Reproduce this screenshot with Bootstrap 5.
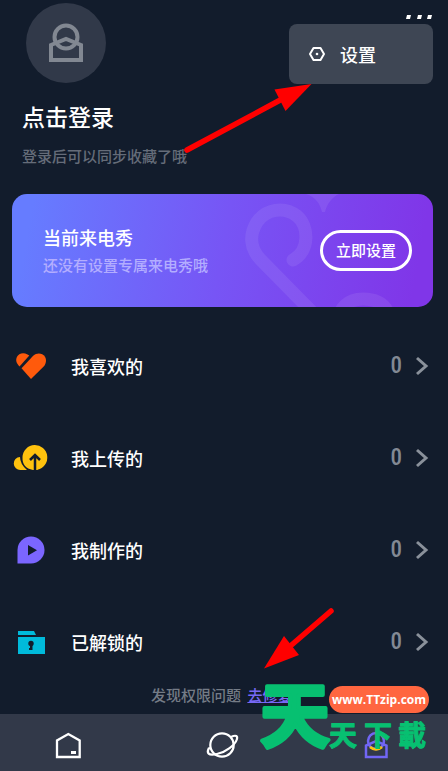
<!DOCTYPE html>
<html lang="zh-CN">
<head>
<meta charset="utf-8">
<meta name="viewport" content="width=device-width, initial-scale=1">
<title>我的</title>
<link href="https://cdn.jsdelivr.net/npm/bootstrap@5.3.0/dist/css/bootstrap.min.css" rel="stylesheet">
<style>
body{background:#121c2c;color:#fff;font-family:"Noto Sans CJK SC",sans-serif;font-size:15px;line-height:24px}
svg{display:block;flex:none;overflow:visible}
.profile{padding:3px 16px 0 22px}
.avatar{width:80px;height:80px;background:#313949;margin-left:4px}
.login-title{font-size:23px;line-height:32px;font-weight:500;margin-top:17px}
.dim{color:#656c79;font-weight:500}
.more{top:12px;right:14px}
.settings-menu{top:24px;right:15px;width:144px;height:60px;background:#3e4654;border-radius:8px;padding-left:20px;gap:15px;font-size:18px;font-weight:500;color:#fff}
.show-card{margin:26px 15px 0 12px;height:113px;border-radius:15px;background:linear-gradient(100deg,#667cff 5%,#7755f5 50%,#8036e8 95%);padding:0 21px 0 31px}
.show-art{right:0;top:0}
.show-title{font-size:18px;line-height:28px;font-weight:500}
.show-sub{color:#b3adff;line-height:28px;font-weight:500}
.set-btn{width:92px;height:41px;border:3px solid #fff;border-radius:21px;color:#fff;font-size:15px;font-weight:500}
.entries{padding-top:13px}
.entry{height:92px;padding:0 20px 0 14px;color:#fff;font-size:18px;font-weight:500}
.entry-icon{width:34px;margin-right:23px}
.amount{font:500 23px/28px "Liberation Sans Narrow","Roboto Condensed","Roboto",sans-serif;color:#828994;margin-right:14px}
.repair{padding:0 0 7px 151px;margin-top:-5px;color:#747b86;font-weight:500}
.repair a{color:#7768f5;margin-left:3px}
.tabs{height:57px;background:#323949;padding:4px 56px 0 52px}
.tab-item{width:32px;height:32px}
.pointer-a{left:184px;top:80px}
.pointer-b{right:112px;bottom:100px}
.brand{right:19px;bottom:13px;width:170px;height:80px;pointer-events:none}
.brand-mark{left:0;top:0}
.brand-mark text{font-family:"Noto Sans CJK TC","Noto Sans CJK SC",sans-serif;font-weight:700;fill:#07c071;stroke:#07c071;stroke-linejoin:round}
.brand-big{font-size:70px;stroke-width:4px}
.brand-small{font-size:28px;stroke-width:1px}
.brand-site{right:0;top:8px;width:100px;height:27px;border-radius:14px;background:#ff6640;color:#fff;font:bold 12px/27px "Open Sans",sans-serif}
</style>
<script src="https://cdn.jsdelivr.net/npm/bootstrap@5.3.0/dist/js/bootstrap.bundle.min.js"></script>
</head>
<body>
<div class="position-relative d-flex flex-column min-vh-100">
<header class="profile">
  <div class="avatar rounded-circle d-flex align-items-center justify-content-center">
    <svg width="36" height="40" viewBox="0 0 36 40" fill="none" stroke="#828892" stroke-width="4"><circle cx="18" cy="14" r="11.5"/><path d="M3 37V22L18 16L33 22V37Z"/></svg>
  </div>
  <h1 class="login-title mb-0">点击登录</h1>
  <p class="dim mb-0 mt-2 pt-1">登录后可以同步收藏了哦</p>
</header>
<button class="btn p-0 border-0 position-absolute more" aria-label="更多"><svg width="28" height="8" fill="#fff"><path d="M1 3H5L4 7H0ZM12 3H16L15 7H11ZM22 3H26L25 7H21Z"/></svg></button>
<button class="btn border-0 position-absolute settings-menu d-flex align-items-center">
  <svg width="16" height="16" viewBox="0 0 16 16" fill="none" stroke="#fff" stroke-width="2"><path d="M4.5 2H11.5L15 8L11.5 14H4.5L1 8Z" stroke-linejoin="round"/><circle cx="8" cy="8" r="1.3" fill="#fff" stroke="none"/></svg>
  <span>设置</span>
</button>

<section class="show-card position-relative overflow-hidden d-flex align-items-center justify-content-between">
  <svg class="position-absolute show-art" width="190" height="113" viewBox="243 194 190 113" fill="none" stroke="#fff" stroke-opacity=".08" stroke-width="13"><path d="M293 260C310 251 309 226 297 216C284 206 266 209 257 222C249 235 250 248 260 259L318 318" stroke-linecap="round"/><path d="M338 322C339 308 348 299 363 299C379 299 388 305 391 322"/><path d="M306 194C316 197 320 204 322 212H325C327 204 332 197 339 194Z" fill="#fff" fill-opacity=".08" stroke="none"/></svg>
  <div class="position-relative"><div class="show-title">当前来电秀</div><div class="show-sub">还没有设置专属来电秀哦</div></div>
  <button class="btn set-btn p-0 position-relative">立即设置</button>
</section>

<nav class="entries" aria-label="我的内容">
  <a href="#" class="entry d-flex align-items-center text-decoration-none">
    <span class="entry-icon"><svg width="34" height="30" viewBox="14 352 34 30" fill="#ff5a0c"><path d="M18.2 366C12.5 359 20 351 27.5 355.4L29.3 356.6L19.5 367.4Z"/><path d="M21.5 369.2L33.2 356.8C37 353 42.5 354 44.8 357.5C47 361 46 365.2 43.2 368L31 380Z"/></svg></span>
    <span>我喜欢的</span><span class="amount ms-auto">0</span>
    <svg width="12" height="18" fill="none" stroke="#8a919b" stroke-width="3"><path d="M1 1L10 9L1 17"/></svg>
  </a>
  <a href="#" class="entry d-flex align-items-center text-decoration-none">
    <span class="entry-icon"><svg width="34" height="30" viewBox="14 444 34 30" fill="#ffc20e"><path d="M20 458A6.500 6.500 0 0 0 20.500 471H27Q20 465 20 458Z"/><path d="M34.500 446A12.500 12.500 0 0 1 37.500 470.700V471H33Q22 469 22.500 458A12.500 12.500 0 0 1 34.500 446Z"/><path d="M35 471V457M30 461L35 456L40 461" fill="none" stroke="#121c2c" stroke-width="2.500"/></svg></span>
    <span>我上传的</span><span class="amount ms-auto">0</span>
    <svg width="12" height="18" fill="none" stroke="#8a919b" stroke-width="3"><path d="M1 1L10 9L1 17"/></svg>
  </a>
  <a href="#" class="entry d-flex align-items-center text-decoration-none">
    <span class="entry-icon"><svg width="34" height="30" viewBox="14 536 34 30"><path d="M17.500 564.500V551A13.500 13.500 0 1 1 31 564.500Z" fill="#7b66ff"/><path d="M28 546V556.500L37 551.300Z" fill="#121c2c"/></svg></span>
    <span>我制作的</span><span class="amount ms-auto">0</span>
    <svg width="12" height="18" fill="none" stroke="#8a919b" stroke-width="3"><path d="M1 1L10 9L1 17"/></svg>
  </a>
  <a href="#" class="entry d-flex align-items-center text-decoration-none">
    <span class="entry-icon"><svg width="34" height="30" viewBox="14 628 34 30" fill="#00badb"><path d="M18 632H34L36 636H18ZM18 638H45V655H18Z"/><g fill="#121c2c"><circle cx="31" cy="644.500" r="2.700"/><path d="M30 645H32.500V651H29V649H30Z"/></g></svg></span>
    <span>已解锁的</span><span class="amount ms-auto">0</span>
    <svg width="12" height="18" fill="none" stroke="#8a919b" stroke-width="3"><path d="M1 1L10 9L1 17"/></svg>
  </a>
</nav>

<p class="repair mb-0">发现权限问题 <a href="#">去修复</a></p>

<nav class="tabs mt-auto d-flex align-items-center justify-content-between" aria-label="主导航">
  <a href="#" class="tab-item" aria-label="首页"><svg width="32" height="32" viewBox="52 729 32 32"><path d="M57 757V740.500L68.300 734L79.700 740.500V757Z" fill="none" stroke="#fff" stroke-width="2.300"/><path d="M71 751H76V754H71Z" fill="#fff"/></svg></a>
  <a href="#" class="tab-item" aria-label="发现"><svg width="32" height="32" viewBox="206 729 32 32" fill="none" stroke="#fff" stroke-width="2.200"><circle cx="222" cy="745" r="11.700"/><path d="M231 737C236 734.500 238 736 236.800 739.500C235 745 226 752 217 754C208 756 206.500 753 208.700 748.500L211 748"/></svg></a>
  <a href="#" class="tab-item" aria-label="我的"><svg width="32" height="32" viewBox="360 729 32 32" fill="none" stroke="#7166f5" stroke-width="2.500"><path d="M366 757V745.500L376 741L386.500 745.500V757Z"/><circle cx="376" cy="741" r="8"/><path d="M370 747Q376 752 382 747" stroke="#ffc20e"/></svg></a>
</nav>

<svg class="position-absolute pointer-a pe-none" width="130" height="75" viewBox="184 80 130 75" fill="red"><path d="M187 150L284 98" stroke="red" stroke-width="5.500" stroke-linecap="round"/><path d="M311.500 84L274.500 89.500L285.500 111Z"/></svg>
<svg class="position-absolute pointer-b pe-none" width="74" height="66" viewBox="262 605 74 66" fill="red"><path d="M331 611L288 648" stroke="red" stroke-width="5.500" stroke-linecap="round"/><path d="M264 668.500L284 636L299 655Z"/></svg>
<div class="brand position-absolute" lang="zh-TW">
  <svg class="brand-mark position-absolute" width="170" height="80">
    <text class="brand-big" x="1" y="64">天</text>
    <text class="brand-small" x="70" y="68">天</text>
    <text class="brand-small" x="105" y="68">下</text>
    <text class="brand-small" x="139" y="68">載</text>
  </svg>
  <span class="brand-site position-absolute text-center">www.TTzip.com</span>
</div>
</div>
</body>
</html>
